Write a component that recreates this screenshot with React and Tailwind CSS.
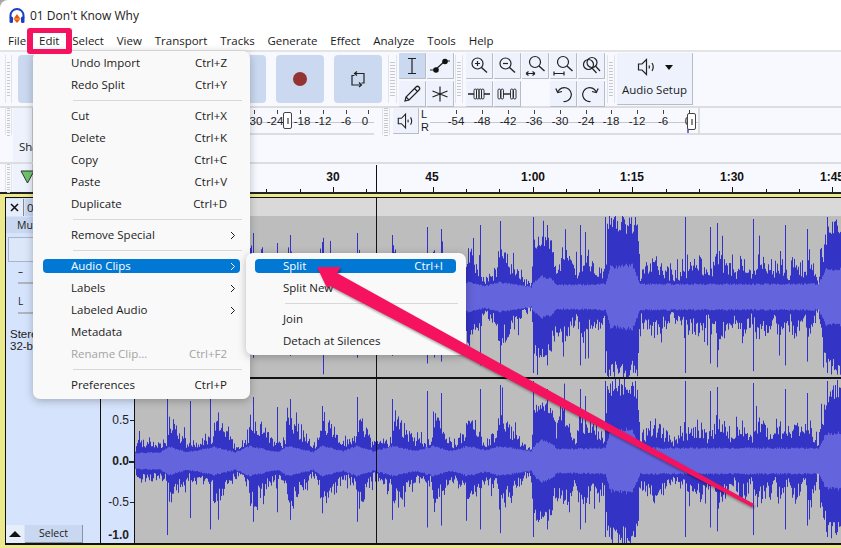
import React from "react";

const FONT = "font-['Open_Sans','Noto_Sans',sans-serif]";

// small seeded generator so the waveform is the same on every load
function rng(seed) {
  let s = seed;
  return () => {
    s = (s * 1664525 + 1013904223) % 4294967296;
    return s / 4294967296;
  };
}

function lerp(keys, x) {
  for (let i = 1; i < keys.length; i++) {
    if (x <= keys[i][0]) {
      const [x0, y0] = keys[i - 1];
      const [x1, y1] = keys[i];
      return y0 + ((y1 - y0) * (x - x0)) / (x1 - x0);
    }
  }
  return keys[keys.length - 1][1];
}

// x is px from the left edge of the wave area
const bodyKeys = [[0, 14], [3, 22], [25, 20], [32, 24], [34, 48], [52, 20], [77, 26], [79, 56], [100, 18], [113, 24], [115, 54], [142, 18], [150, 26], [152, 54], [178, 18], [184, 26], [186, 54], [208, 22], [220, 26], [222, 54], [238, 20], [256, 26], [258, 54], [280, 22], [296, 26], [298, 54], [316, 22], [330, 28], [332, 56], [350, 22], [362, 32], [364, 58], [380, 30], [396, 14], [398, 62], [416, 60], [421, 38], [428, 54], [440, 28], [448, 46], [470, 28], [472, 82], [502, 80], [505, 28], [518, 44], [538, 26], [565, 42], [575, 26], [582, 50], [600, 28], [605, 44], [618, 26], [622, 48], [640, 28], [642, 44], [655, 28], [658, 46], [670, 28], [673, 52], [683, 16], [685, 48], [695, 78], [706, 78]];
const rmsKeys = [[0, 8], [25, 9], [34, 14], [52, 9], [79, 14], [100, 9], [115, 15], [142, 9], [152, 15], [178, 9], [186, 15], [208, 10], [222, 15], [238, 10], [258, 15], [280, 10], [298, 15], [316, 10], [332, 15], [350, 11], [364, 15], [396, 10], [398, 14], [405, 21], [417, 18], [421, 12], [470, 13], [475, 30], [497, 32], [505, 13], [683, 13], [691, 28], [706, 28]];
const spikes = { 32: 78, 55: 60, 75: 72, 118: 64, 142: 54, 155: 62, 187: 55, 222: 64, 257: 62, 292: 70, 306: 68, 345: 72, 365: 76, 398: 80, 412: 72, 445: 72, 450: 65, 470: 80, 500: 80, 550: 80, 575: 70, 582: 74, 618: 78, 650: 72, 672: 68, 692: 80, 700: 76 };

function buildWave(seed, half) {
  const r = rng(seed);
  let dark = "";
  let light = "";
  const side = (x) => {
    const body = lerp(bodyKeys, x);
    const solid = body > 58 ? 0.78 + 0.22 * r() : 0.55 + 0.45 * r();
    const extra = r() > 0.9 ? r() * body * 0.6 : 0;
    return Math.min(half, body * solid + extra);
  };
  for (let x = 0; x < 706; x++) {
    const up = spikes[x] ? Math.min(half, spikes[x]) : side(x);
    const down = spikes[x] ? spikes[x] * 0.95 : side(x);
    const rms = lerp(rmsKeys, x) * (0.92 + 0.14 * r());
    dark += `M${x + 0.5} ${(half - up).toFixed(1)}V${(half + down).toFixed(1)}`;
    light += `M${x + 0.5} ${(half - rms).toFixed(1)}V${(half + rms).toFixed(1)}`;
  }
  return { dark, light };
}

const waveTop = buildWave(11, 81);
const waveBottom = buildWave(47, 82);

function Wave({ wave, h, className }) {
  return (
    <div className={"relative bg-[#bdbdbd] overflow-hidden " + className}>
      <svg width="706" height={h} viewBox={`0 0 706 ${h}`} className="block">
        <path d={wave.dark} stroke="#3333c6" strokeWidth="1" fill="none" />
        <path d={wave.light} stroke="#6464dc" strokeWidth="1" fill="none" />
      </svg>
    </div>
  );
}

function Gripper({ className = "" }) {
  return (
    <div className={"flex flex-col justify-center gap-[2px] border-x border-[#e1e3e8] px-[1px] " + className}>
      {Array.from({ length: 12 }).map((_, i) => (
        <div key={i} className="h-[1px] w-full bg-[#c6c8cc]" />
      ))}
    </div>
  );
}

function ToolBtn({ children, active, className = "" }) {
  return (
    <div className={"flex items-center justify-center rounded-[1px] border-b border-r border-[#b9bcc4] " + (active ? "bg-[#cad8f0] " : "bg-[#edf2fc] ") + className}>
      {children}
    </div>
  );
}

const ic = { fill: "none", stroke: "#222", strokeWidth: 1.2 };

function Speaker({ size = 22 }) {
  return (
    <svg width={size} height={size} viewBox="0 0 22 22" {...ic}>
      <path d="M2.500 8h3.500L10.500 3.500v15L6 14H2.500z" />
      <path d="M13 9.500c.6 1 .6 2 0 3M16 7c1.500 2.400 1.500 5.600 0 8" />
    </svg>
  );
}

function Mag({ children, shift }) {
  return (
    <svg width="22" height="22" viewBox="0 0 22 22" {...ic}>
      <g transform={shift ? "translate(1.500 -1.500)" : undefined}>
        <circle cx="9.500" cy="8.500" r="5.500" />
        <path d="M13.500 12.500l5.500 5" strokeWidth="1.400" />
      </g>
      {children}
    </svg>
  );
}

function Chevron() {
  return (
    <svg width="6" height="9" viewBox="0 0 6 9" className="mr-[4px]">
      <path d="M1 1l3.500 3.500L1 8" fill="none" stroke="currentColor" strokeWidth="1" />
    </svg>
  );
}

function MenuRow({ label, shortcut, arrow, active, disabled }) {
  return (
    <div className="h-[22px] flex items-center px-[10px]">
      <div className={"flex-1 h-[14px] flex items-center justify-between rounded-[4px] pl-[28px] " + (active ? "bg-[#0078d4] text-white " : "") + (disabled ? "text-[#a3a3a3]" : "")}>
        <span>{label}</span>
        {shortcut && <span className="pr-[13px]">{shortcut}</span>}
        {arrow && <Chevron />}
      </div>
    </div>
  );
}

function MenuSep() {
  return <div className="ml-[40px] mr-[8px] my-[4px] h-[1px] bg-[#d8d8d8]" />;
}

function Ticks({ items, marks, className = "" }) {
  return (
    <div className={"relative h-full " + className}>
      <div className="absolute left-0 right-0 top-[14px] h-[1px] bg-[#c8c8c8]" />
      {marks.map((x) => (
        <span key={x} style={{ left: x }} className="absolute top-[2px] w-[1px] h-[4px] bg-[#444]" />
      ))}
      {items.map(([x, t]) => (
        <span key={t} style={{ left: x }} className="absolute top-[6px] -translate-x-1/2 text-[11.500px] leading-[15px] text-[#222] font-['Liberation_Sans',sans-serif]">
          {t}
        </span>
      ))}
    </div>
  );
}

function Thumb({ className }) {
  return (
    <div className={"absolute w-[9px] h-[17px] rounded-[2px] border border-[#444] bg-white flex items-center justify-center " + className}>
      <div className="w-[2px] h-[6px] bg-[#888]" />
    </div>
  );
}

const menuBar = ["File", "Edit", "Select", "View", "Transport", "Tracks", "Generate", "Effect", "Analyze", "Tools", "Help"];
const rulerLabels = [[198, "30"], [297, "45"], [398, "1:00"], [497, "1:15"], [597, "1:30"], [697, "1:45"]];

export default function App() {
  return (
    <div className={"relative w-[841px] h-[548px] overflow-hidden bg-[#a8a8a8] text-[11.500px] text-[#1b1b1b] " + FONT}>
      <div className="h-full bg-white rounded-tl-[8px] overflow-hidden">
        {/* title bar */}
        <div className="h-[30px] flex items-center pl-[9px] gap-[5px] pt-[1px]">
          <svg width="16" height="16" viewBox="0 0 16 16">
            <path d="M1.500 10V7.500a6.500 6.500 0 0 1 13 0V10" fill="none" stroke="#1b3fc4" strokeWidth="2" />
            <rect x="0.500" y="8.500" width="3.500" height="6.500" rx="1.500" fill="#1b3fc4" />
            <rect x="12" y="8.500" width="3.500" height="6.500" rx="1.500" fill="#1b3fc4" />
            <path d="M8 6l3.500 5L8 15l-3.500-4z" fill="#e8541c" />
            <path d="M4.500 11h7" stroke="#f2c21c" strokeWidth="1" />
          </svg>
          <span className="text-[12px]">01 Don't Know Why</span>
        </div>

        {/* menu bar */}
        <div className="h-[22px] flex pl-[8px] gap-[12.800px] border-b-[2px] border-[#e4e4e4]">
          {menuBar.map((m) => (
            <span key={m} className="leading-[21px]">{m}</span>
          ))}
        </div>

        {/* toolbars */}
        <div className="h-[56px] flex bg-[#f8f9ff] border-b-[2px] border-[#dcdde0]">
          <Gripper className="w-[7px] ml-[5px] my-[3px]" />
          <div className="w-[6px]" />
          <div className="flex gap-[10px] py-[3px]">
            <div className="w-[248px] rounded-[4px] bg-[#cad8f0]" />
            <div className="w-[48px] rounded-[4px] bg-[#cad8f0] flex items-center justify-center">
              <div className="w-[14px] h-[14px] rounded-full bg-[#943333]" />
            </div>
            <div className="w-[48px] rounded-[4px] bg-[#cad8f0] flex items-center justify-center">
              <svg width="18" height="18" viewBox="0 0 18 18" {...ic}>
                <path d="M6 3.500h9v9.500h-2.500M12 15H3V5.500h2.500" />
                <path d="M8 1.500l-2.500 2 2.500 2M10 12.500l2.500 2.500-2.500 2" />
              </svg>
            </div>
          </div>
          <Gripper className="w-[9px] ml-[6px] my-[3px]" />
          <div className="ml-[2px] pt-[1px] grid grid-cols-[27px_27px] grid-rows-[26px_26px] gap-x-[1px] gap-y-[2px]">
            <ToolBtn active>
              <svg width="14" height="20" viewBox="0 0 14 20" {...ic}><path d="M3 2.500h8M7 2.500v15M3 17.500h8" /></svg>
            </ToolBtn>
            <ToolBtn>
              <svg width="22" height="20" viewBox="0 0 22 20"><path d="M1 14h5M6 14L16 5M16 5h5" stroke="#222" strokeWidth="1.200" fill="none" /><circle cx="7" cy="14" r="2.800" fill="#111" /><circle cx="16" cy="5.500" r="2.800" fill="#111" /></svg>
            </ToolBtn>
            <ToolBtn>
              <svg width="20" height="20" viewBox="0 0 20 20" {...ic}><path d="M3 17l1-4L14 3c1-1 2-1 3 0s1 2 0 3L7 16z" /><path d="M4 13l3 3M12.500 4.500l3 3" /></svg>
            </ToolBtn>
            <ToolBtn>
              <svg width="20" height="20" viewBox="0 0 20 20" {...ic}><path d="M10 2.500v15M2.500 7l15 6M17.500 7l-15 6" /></svg>
            </ToolBtn>
          </div>
          <Gripper className="w-[8px] ml-[1px] my-[3px]" />
          <div className="ml-[3px] pt-[1px] grid grid-cols-[27px_27px_27px_27px_27px] grid-rows-[26px_26px] gap-x-[1px] gap-y-[2px]">
            <ToolBtn><Mag><path d="M7 8.500h5M9.500 6v5" /></Mag></ToolBtn>
            <ToolBtn><Mag><path d="M7 8.500h5" /></Mag></ToolBtn>
            <ToolBtn><Mag shift><path d="M2 18.500h9M2 18.500l2.500-2M2 18.500l2.500 2M11 18.500l-2.500-2M11 18.500l-2.500 2" /></Mag></ToolBtn>
            <ToolBtn><Mag shift><path d="M2 16.500v4M2 18.500h10M12 16.500v4" /></Mag></ToolBtn>
            <ToolBtn>
              <svg width="22" height="22" viewBox="0 0 22 22" {...ic}>
                <circle cx="12" cy="7.500" r="5" /><circle cx="8.500" cy="9.500" r="5" /><path d="M15.500 11l4.500 5M12 13l4.500 5" />
              </svg>
            </ToolBtn>
            <ToolBtn>
              <svg width="24" height="16" viewBox="0 0 24 16" fill="none" stroke="#222" strokeWidth="0.900">
                <path d="M1 8h6M17 8h6" strokeWidth="1.400" />
                <rect x="7" y="3" width="2.500" height="10" rx="1.250" />
                <rect x="9.500" y="3" width="2.500" height="10" rx="1.250" />
                <rect x="12" y="3" width="2.500" height="10" rx="1.250" />
                <rect x="14.500" y="3" width="2.500" height="10" rx="1.250" />
              </svg>
            </ToolBtn>
            <ToolBtn>
              <svg width="24" height="16" viewBox="0 0 24 16" fill="none" stroke="#222" strokeWidth="0.900">
                <path d="M8.500 8h7" strokeWidth="1.400" />
                <rect x="3" y="3" width="2.500" height="10" rx="1.250" />
                <rect x="6" y="3" width="2.500" height="10" rx="1.250" />
                <rect x="15.500" y="3" width="2.500" height="10" rx="1.250" />
                <rect x="18.500" y="3" width="2.500" height="10" rx="1.250" />
              </svg>
            </ToolBtn>
            <div />
            <ToolBtn>
              <svg width="20" height="20" viewBox="0 0 20 20" {...ic}><path d="M5 7.500A7 7 0 1 1 10.500 17.500M2.800 4.500L4.700 8.500l4.300-1" /></svg>
            </ToolBtn>
            <ToolBtn>
              <svg width="20" height="20" viewBox="0 0 20 20" {...ic}><path d="M15 7.500A7 7 0 1 0 9.500 17.500M17.200 4.500L15.300 8.500l-4.300-1" /></svg>
            </ToolBtn>
          </div>
          <Gripper className="w-[8px] ml-[2px] my-[3px]" />
          <ToolBtn className="ml-[2px] my-[1px] w-[76px] flex-col !justify-start pt-[2px]">
            <div className="flex items-center gap-[7px] h-[24px]">
              <Speaker size={22} />
              <span className="w-0 h-0 border-x-[4px] border-x-transparent border-t-[5px] border-t-[#111]" />
            </div>
            <span className="mt-[2px] text-[11.500px]">Audio Setup</span>
          </ToolBtn>
        </div>

        {/* meters + share row */}
        <div className="h-[56px] flex bg-[#f8f9ff] border-b-[2px] border-[#dcdde0] relative">
          <Gripper className="w-[7px] ml-[5px] h-[27px]" />
          <div className="ml-[1px] w-[20px] h-[54px] bg-[#edf2fc] border-r border-[#c8ccd4] pt-[31px] pl-[6px] leading-[16px]">Sha</div>
          <div className="w-[217px]" />
          <div className="relative h-[27px] w-[124px] border-b-[2px] border-[#dcdde0]">
            <Ticks marks={[4, 27, 50, 73, 96, 118]} items={[[6, "30"], [25, "-24"], [52, "-18"], [73, "-12"], [96, "-6"], [115, "0"]]} />
            <Thumb className="left-[33px] top-[4px]" />
          </div>
          <Gripper className="w-[8px] ml-[8px] h-[27px]" />
          <ToolBtn className="ml-[3px] w-[26px] h-[26px]"><Speaker size={20} /></ToolBtn>
          <div className="flex flex-col ml-[2px] w-[9px] text-[11px] leading-[13px] h-[27px] font-['Liberation_Sans',sans-serif]"><span>L</span><span>R</span></div>
          <div className="relative w-[268px] h-[27px] border-b-[2px] border-[#dcdde0]">
            <Ticks marks={[26, 52, 78, 104, 130, 156, 181, 207, 233, 259]} items={[[26, "-54"], [52, "-48"], [78, "-42"], [104, "-36"], [130, "-30"], [156, "-24"], [181, "-18"], [207, "-12"], [233, "-6"], [258, "0"]]} />
            <span className="absolute left-[257px] top-[21px] w-[2px] h-[4px] bg-[#7070e0]" />
            <Thumb className="left-[257px] top-[5px]" />
          </div>
          <div className="w-[2px] h-[27px] bg-[#dcdde0]" />
          <div className="w-[141px] h-[27px] border-b-[2px] border-[#dcdde0]" />
        </div>

        {/* ruler */}
        <div className="h-[28px] flex bg-[#f8f9ff]">
          <Gripper className="w-[7px] ml-[5px]" />
          <div className="ml-[1px] w-[20px] bg-[#edf2fc] border-r border-[#c8ccd4] pt-[6px] pl-[7px]">
            <svg width="16" height="14" viewBox="0 0 16 14" className="overflow-visible">
              <path d="M1 1h13l-6.500 12z" fill="#6cc56c" stroke="#333" strokeWidth="1" />
            </svg>
          </div>
          <div className="relative ml-[102px] flex-1 text-[12px] font-bold font-['Liberation_Sans',sans-serif] text-[#111]">
            {rulerLabels.map(([x, t]) => (
              <span key={t} style={{ left: x }} className="absolute top-[6px] -translate-x-1/2 leading-[15px]">{t}</span>
            ))}
            {Array.from({ length: 22 }).map((_, i) => (
              <span key={i} style={{ left: 198 + (i - 5) * 33.27 }} className={"absolute bottom-0 w-[1px] bg-[#111] " + (i % 3 === 2 ? "h-[5px]" : "h-[3px]")} />
            ))}
            <span className="absolute left-[241px] top-[1px] bottom-0 w-[1px] bg-[#111]" />
          </div>
        </div>

        {/* track */}
        <div className="h-[356px] bg-[#ece88c] border-t-[2px] border-[#222] pt-[3px] pl-[5px] pb-[3px]">
          <div className="h-full flex border-y-[1px] border-b-[2px] border-[#111] bg-[#d2e0fa]">
            <div className="w-[96px] border-x border-[#111] flex flex-col bg-[#d5e3fc]">
              <div className="flex h-[17px] gap-[1px] mt-[1px]">
                <div className="w-[18px] bg-[#e6edfb] flex items-center justify-center border-r border-[#888]">
                  <svg width="9" height="9" viewBox="0 0 9 9"><path d="M1 1l7 7M8 1l-7 7" stroke="#111" strokeWidth="1.500" /></svg>
                </div>
                <div className="w-[20px] bg-[#c9d7f0] pl-[2px] leading-[17px]">0</div>
              </div>
              <div className="mt-[1px] h-[16px] bg-[#c9d7f0] pl-[11px] text-[10.500px] leading-[16px]">Mut</div>
              <div className="mx-[2px] mt-[4px] h-[25px] bg-[#dde7fa] border border-[#aab4c8]" />
              <div className="pl-[12px] mt-[4px] text-[10px] leading-[10px]">–</div>
              <div className="ml-[12px] mt-[3px] w-[60px] h-[5px] border-b-[2px] border-[#b0b4bc]" />
              <div className="pl-[12px] mt-[12px] text-[10px] leading-[10px]">L</div>
              <div className="ml-[12px] mt-[3px] w-[60px] h-[5px] border-b-[2px] border-[#b0b4bc]" />
              <div className="pl-[4px] mt-[14px] text-[11.500px] leading-[12px] font-['Liberation_Sans',sans-serif]">Stereo<br />32-bit</div>
              <div className="mt-auto flex h-[18px] gap-[1px]">
                <div className="w-[18px] bg-[#e6edfb] flex items-center justify-center">
                  <span className="w-0 h-0 border-x-[6px] border-x-transparent border-b-[6px] border-b-[#111]" />
                </div>
                <div className="w-[58px] bg-[#c9d7f0] border-r border-b border-[#8a93a6] text-center text-[10.500px] leading-[17px]">Select</div>
              </div>
            </div>
            <div className="w-[34px] border-r border-[#111] bg-[#d5e3fc] flex flex-col">
              <div className="flex-1" />
              <div className="h-[164px] relative text-[12px] font-['Liberation_Sans',sans-serif] text-[#222]">
                <span className="absolute right-[5px] top-[34px] leading-[14px]">0.5</span>
                <span className="absolute right-[5px] top-[75px] leading-[14px] font-bold">0.0</span>
                <span className="absolute right-[5px] top-[116px] leading-[14px]">-0.5</span>
                <span className="absolute right-[5px] top-[149px] leading-[14px] font-bold">-1.0</span>
                <span className="absolute right-0 top-[41px] w-[4px] h-[1px] bg-[#222]" />
                <span className="absolute right-0 top-[82px] w-[5px] h-[2px] bg-[#222]" />
                <span className="absolute right-0 top-[123px] w-[4px] h-[1px] bg-[#222]" />
              </div>
            </div>
            <div className="flex-1 relative flex flex-col">
              <div className="h-[18px] bg-[#d9d9d9]" />
              <Wave wave={waveTop} h={162} className="h-[161px]" />
              <div className="h-[2px] bg-[#111]" />
              <Wave wave={waveBottom} h={164} className="flex-1" />
              <div className="absolute top-0 bottom-0 left-[241px] w-[1px] bg-[#111]" />
            </div>
          </div>
        </div>
      </div>

      {/* Edit highlight */}
      <div className="absolute left-[27px] top-[28px] w-[45px] h-[26px] border-x-[6px] border-y-[5px] border-[#f5135f] rounded-[3px] z-20" />

      {/* edit menu */}
      <div className="absolute left-[33px] top-[51px] w-[217px] h-[348px] pt-[1px] bg-[#f9f9f9] rounded-[7px] shadow-[0_2px_8px_rgba(0,0,0,0.25)] z-10">
        <MenuRow label="Undo Import" shortcut="Ctrl+Z" />
        <MenuRow label="Redo Split" shortcut="Ctrl+Y" />
        <MenuSep />
        <MenuRow label="Cut" shortcut="Ctrl+X" />
        <MenuRow label="Delete" shortcut="Ctrl+K" />
        <MenuRow label="Copy" shortcut="Ctrl+C" />
        <MenuRow label="Paste" shortcut="Ctrl+V" />
        <MenuRow label="Duplicate" shortcut="Ctrl+D" />
        <MenuSep />
        <MenuRow label="Remove Special" arrow />
        <MenuSep />
        <MenuRow label="Audio Clips" arrow active />
        <MenuRow label="Labels" arrow />
        <MenuRow label="Labeled Audio" arrow />
        <MenuRow label="Metadata" />
        <MenuRow label="Rename Clip..." shortcut="Ctrl+F2" disabled />
        <MenuSep />
        <MenuRow label="Preferences" shortcut="Ctrl+P" />
      </div>

      {/* audio clips submenu */}
      <div className="absolute left-[246px] top-[253px] w-[220px] h-[102px] pt-[2px] bg-[#f9f9f9] rounded-[7px] shadow-[0_2px_8px_rgba(0,0,0,0.25)] z-10">
        <div className="-ml-[1px]">
          <MenuRow label="Split" shortcut="Ctrl+I" active />
          <MenuRow label="Split New" />
          <MenuSep />
          <MenuRow label="Join" />
          <MenuRow label="Detach at Silences" />
        </div>
      </div>

      {/* annotation arrow */}
      <svg width="841" height="548" viewBox="0 0 841 548" className="absolute left-0 top-0 z-30 pointer-events-none drop-shadow-[1px_2px_1px_rgba(0,0,0,0.35)]">
        <path d="M317 267L341 267L337 273L754 504L752 507L330 286L327 288Z" fill="#f5135f" />
      </svg>
    </div>
  );
}
